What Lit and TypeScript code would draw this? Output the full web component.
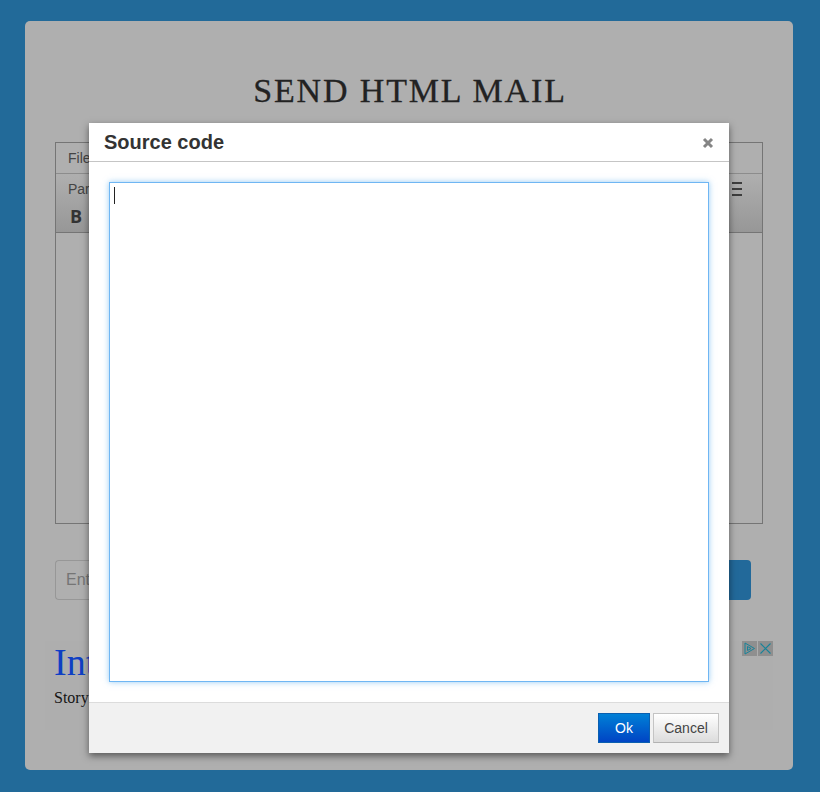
import { LitElement, html, css } from "lit";
import { customElement } from "lit/decorators.js";

@customElement("app-root")
export class AppRoot extends LitElement {
  static styles = css`
    :host {
      display: block;
      position: relative;
      width: 820px;
      height: 792px;
      background: #226a99;
      overflow: hidden;
      font-family: "Liberation Sans", Arial, sans-serif;
    }
    .page {
      height: 792px;
      box-sizing: border-box;
      padding: 21px 27px 22px 25px;
      display: flex;
    }
    .card {
      flex: 1;
      background: #afafaf;
      border-radius: 5px;
      padding: 51px 30px 0;
      box-sizing: border-box;
    }
    h1 {
      margin: 0;
      height: 70px;
      padding-left: 2px;
      font: 400 34px/38px "Liberation Serif", serif;
      letter-spacing: 1.85px;
      color: #222;
      -webkit-text-stroke: 0.3px #222;
      text-align: center;
    }
    .editor {
      width: 708px;
      height: 382px;
      box-sizing: border-box;
      border: 1px solid #757575;
    }
    .menu {
      height: 31px;
      box-sizing: border-box;
      padding: 7px 12px;
      font-size: 14px;
      line-height: 16px;
      color: #444;
      border-bottom: 1px solid #8c8c8c;
    }
    .tools {
      height: 59px;
      box-sizing: border-box;
      position: relative;
      padding: 7px 12px 0;
      border-bottom: 1px solid #757575;
      background: linear-gradient(#afafaf, #979797);
      color: #444;
      font-size: 14px;
      line-height: 16px;
    }
    .bold {
      display: block;
      margin: 9px 0 0 2px;
      font: 700 18px/20px "Open Sans", sans-serif;
      color: #333;
    }
    .burger {
      position: absolute;
      right: 20px;
      top: 8px;
      width: 10px;
      height: 14px;
      display: flex;
      flex-direction: column;
      justify-content: space-between;
    }
    .burger i {
      display: block;
      height: 2px;
      background: #3d3d3d;
    }
    .form {
      display: flex;
      width: 696px;
      height: 40px;
      margin-top: 36px;
    }
    .input {
      flex: 1;
      box-sizing: border-box;
      border: 1px solid #979797;
      border-right: 0;
      border-radius: 4px 0 0 4px;
      padding: 0 10px;
      font-size: 16px;
      line-height: 38px;
      color: #757575;
    }
    .send {
      width: 120px;
      background: #22699a;
      border-radius: 0 4px 4px 0;
    }
    .ad {
      position: relative;
      margin: 41px -10px 0 -10px;
      height: 89px;
      box-sizing: border-box;
      padding: 0 9px;
      background: #aeaeae;
    }
    .ad a {
      display: block;
      font: 400 38px/42px "Liberation Serif", serif;
      color: #0f3fc4;
      text-decoration: none;
    }
    .ad p {
      margin: 6px 0 0;
      font: 400 16px/18px "Liberation Serif", serif;
      color: #141414;
    }
    .adicons {
      position: absolute;
      right: 0;
      top: 0;
      display: flex;
      gap: 1px;
    }
    .adicons svg {
      display: block;
      width: 15px;
      height: 15px;
      background: #8f8f8f;
    }
    .modal {
      position: absolute;
      left: 89px;
      top: 123px;
      width: 640px;
      height: 630px;
      display: flex;
      flex-direction: column;
      background: #fff;
      box-shadow: 0 3px 7px rgba(0, 0, 0, 0.5);
    }
    .head {
      height: 39px;
      flex: none;
      box-sizing: border-box;
      border-bottom: 1px solid #c5c5c5;
      padding: 0 15px;
      display: flex;
      align-items: center;
      justify-content: space-between;
      font-size: 20px;
      font-weight: 700;
      color: #333;
    }
    .head svg {
      display: block;
      margin-top: 1px;
    }
    .body {
      flex: 1;
      padding: 20px;
    }
    .area {
      width: 600px;
      height: 500px;
      box-sizing: border-box;
      border: 1px solid #6fb6f3;
      box-shadow: 0 0 6px rgba(82, 168, 236, 0.6);
      padding: 4px;
    }
    .caret {
      display: block;
      width: 1px;
      height: 17px;
      background: #222;
    }
    .foot {
      height: 51px;
      flex: none;
      box-sizing: border-box;
      border-top: 1px solid #dcdcdc;
      background: #f1f1f1;
      padding: 10px;
      display: flex;
      justify-content: flex-end;
      gap: 3px;
    }
    button {
      height: 30px;
      padding: 0;
      font: 400 14px "Liberation Sans", Arial, sans-serif;
      box-sizing: border-box;
    }
    .ok {
      width: 52px;
      color: #fff;
      border: 1px solid #0a5fb0;
      background: linear-gradient(#0080d6, #0044c4);
    }
    .cancel {
      width: 66px;
      color: #444;
      border: 1px solid #c4c4c4;
      border-bottom-color: #b2b2b2;
      background: linear-gradient(#fff, #dcdcdc);
    }
  `;

  render() {
    return html`
      <div class="page">
        <main class="card">
          <h1>SEND HTML MAIL</h1>
          <div class="editor">
            <div class="menu">File</div>
            <div class="tools">
              Paragraph
              <b class="bold">B</b>
              <span class="burger"><i></i><i></i><i></i></span>
            </div>
          </div>
          <div class="form">
            <div class="input">Enter email</div>
            <div class="send"></div>
          </div>
          <div class="ad">
            <a>Internet</a>
            <p>Story</p>
            <div class="adicons">
              <svg viewBox="0 0 15 15" fill="none" stroke="#17839a" stroke-width="1">
                <path d="M3 2v11M3 2l9.5 5.5L3 13M5.5 5.5v4l3.5-2z" />
              </svg>
              <svg viewBox="0 0 15 15" fill="none" stroke="#17839a" stroke-width="1.1">
                <path d="M2.5 2.5l10 10M12.5 2.5l-10 10" />
              </svg>
            </div>
          </div>
        </main>
      </div>
      <section class="modal">
        <header class="head">
          <span>Source code</span>
          <svg width="12" height="12" viewBox="0 0 12 12" fill="none" stroke="#858585" stroke-width="3">
            <path d="M2 2l8 8M10 2l-8 8" />
          </svg>
        </header>
        <div class="body">
          <div class="area"><span class="caret"></span></div>
        </div>
        <footer class="foot">
          <button class="ok">Ok</button>
          <button class="cancel">Cancel</button>
        </footer>
      </section>
    `;
  }
}
